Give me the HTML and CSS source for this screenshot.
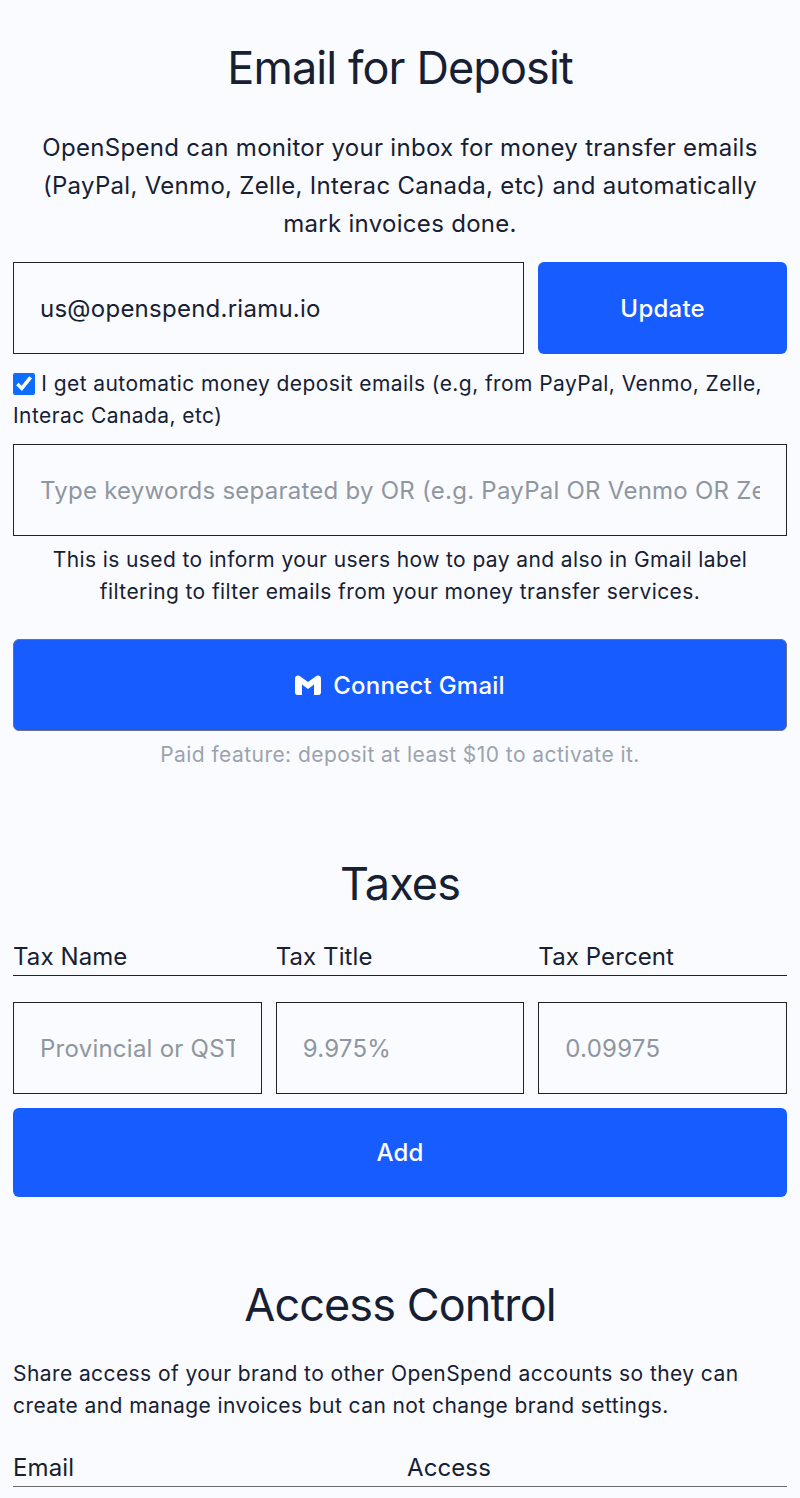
FILE: index.html
```html
<!DOCTYPE html>
<html lang="en">
<head>
    <meta charset="UTF-8">
    <meta name="viewport" content="width=device-width, initial-scale=1.0">
    <title>Brand Settings</title>
    <link rel="stylesheet" href="styles.css">
</head>
<body>
    <div class="container">
        <section class="deposit">
            <h2>Email for Deposit</h2>
            <p class="lead">OpenSpend can monitor your inbox for money transfer emails (PayPal, Venmo, Zelle, Interac Canada, etc) and automatically mark invoices done.</p>
            <div class="grid-3">
                <input class="field span-2" type="text" value="us@openspend.riamu.io">
                <button class="button">Update</button>
            </div>
            <label class="check-row">
                <input class="check" type="checkbox" checked>
                I get automatic money deposit emails (e.g, from PayPal, Venmo, Zelle, Interac Canada, etc)
            </label>
            <input class="field keywords" type="text" placeholder="Type keywords separated by OR (e.g. PayPal OR Venmo OR Zelle)">
            <p class="note">This is used to inform your users how to pay and also in Gmail label filtering to filter emails from your money transfer services.</p>
            <button class="button gmail-button">
                <svg class="gmail-icon" viewBox="0 0 26 20" width="26" height="20" aria-hidden="true">
                    <path fill="currentColor" d="M0 3.500C0 1 2.700-.4 4.700 1L13 7 21.300 1C23.300-.4 26 1 26 3.500V17.500C26 18.900 24.900 20 23.500 20H19V9.500L13 14 7 9.500V20H2.500C1.100 20 0 18.900 0 17.500Z"/>
                </svg>
                Connect Gmail
            </button>
            <p class="hint">Paid feature: deposit at least $10 to activate it.</p>
        </section>

        <section class="taxes">
            <h2>Taxes</h2>
            <div class="grid-3 table-head">
                <span>Tax Name</span>
                <span>Tax Title</span>
                <span>Tax Percent</span>
            </div>
            <div class="grid-3 tax-inputs">
                <input class="field" type="text" placeholder="Provincial or QST">
                <input class="field" type="text" placeholder="9.975%">
                <input class="field" type="text" placeholder="0.09975">
            </div>
            <button class="button add-button">Add</button>
        </section>

        <section class="access">
            <h2>Access Control</h2>
            <p class="access-text">Share access of your brand to other OpenSpend accounts so they can create and manage invoices but can not change brand settings.</p>
            <div class="grid-2 table-head">
                <span>Email</span>
                <span>Access</span>
            </div>
        </section>
    </div>
</body>
</html>
```

FILE: styles.css
```css
* {
    box-sizing: border-box;
}
body {
    font-family: Inter, "Noto Sans", sans-serif;
    background-color: #f9fbfe;
    color: #172033;
    font-size: 24px;
    line-height: 1.6;
    letter-spacing: 0.3px;
    margin: 0;
}
.container {
    padding: 0 13px;
}
h2 {
    font-size: 45px;
    font-weight: 400;
    line-height: 54px;
    letter-spacing: -0.9px;
    text-align: center;
    margin: 0;
}
.deposit {
    padding-top: 41px;
}
.lead {
    text-align: center;
    line-height: 38.2px;
    margin: 34px 0 18.6px;
}
.grid-3 {
    display: grid;
    grid-template-columns: repeat(3, 1fr);
    gap: 14px;
}
.grid-2 {
    display: grid;
    grid-template-columns: repeat(2, 1fr);
    gap: 14px;
}
.span-2 {
    grid-column: span 2;
}
.field {
    width: 100%;
    height: 92px;
    padding: 0 26px;
    border: 1px solid #222;
    background-color: transparent;
    color: #172033;
    font-family: inherit;
    font-size: 24px;
    letter-spacing: 0.25px;
}
.field::placeholder {
    color: #8f96a0;
    opacity: 1;
}
.button {
    display: flex;
    align-items: center;
    justify-content: center;
    height: 92px;
    border: none;
    border-radius: 6px;
    background-color: #175cff;
    color: white;
    font-family: inherit;
    font-size: 24px;
    font-weight: 500;
    letter-spacing: 0.25px;
}
.check-row {
    display: block;
    font-size: 21px;
    line-height: 32px;
    letter-spacing: 0.42px;
    margin-top: 14px;
}
.check {
    width: 22px;
    height: 22px;
    margin: 0;
    vertical-align: -4px;
    accent-color: #0d6efd;
}
.keywords {
    display: block;
    margin-top: 12px;
}
.note {
    font-size: 21px;
    line-height: 32px;
    letter-spacing: 0.4px;
    text-align: center;
    margin: 8px 0 31px;
}
.gmail-button {
    width: 100%;
    gap: 12px;
    border: 1px solid #6b7280;
}
.gmail-icon {
    display: block;
}
.hint {
    font-size: 21px;
    line-height: 32px;
    letter-spacing: 0.45px;
    text-align: center;
    color: #9ca3af;
    margin: 8px 0 0;
}
.taxes {
    margin-top: 86px;
}
.table-head {
    border-bottom: 1px solid #222;
    line-height: 38px;
    height: 38px;
    letter-spacing: 0.1px;
}
.taxes .table-head {
    margin-top: 27px;
}
.tax-inputs {
    margin-top: 26px;
}
.add-button {
    width: 100%;
    height: 89px;
    margin-top: 14px;
}
.access {
    margin-top: 81px;
}
.access-text {
    font-size: 21px;
    line-height: 32px;
    letter-spacing: 0.42px;
    margin: 26px 0 0;
}
.access .table-head {
    margin-top: 27px;
    border-bottom-color: #6b6b6b;
}
```
